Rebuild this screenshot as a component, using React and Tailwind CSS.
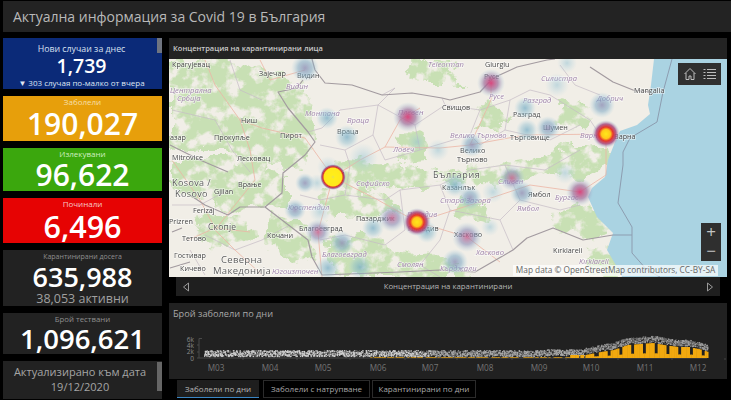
const FONT = { fontFamily: '"Open Sans","Noto Sans",sans-serif' };

const heat = [
  [305,68,14,'b2'],[327,118,11,'b'],[347,137,12,'b'],[408,117,15,'p'],[363,158,15,'l'],[417,142,10,'l'],[438,150,11,'l'],[328,167,11,'l'],
  [491,83,14,'p'],[567,63,10,'l'],[557,85,12,'l'],[525,108,11,'b'],[527,130,11,'b'],[548,128,12,'b2'],[602,105,13,'b2'],[472,145,12,'b2'],
  [455,185,12,'b'],[493,192,11,'l'],[565,173,11,'l'],[470,198,12,'b2'],[512,178,13,'p2'],[522,193,12,'b2'],[580,192,14,'p'],
  [467,237,15,'p2'],[455,262,13,'b2'],[392,218,14,'p2'],[373,228,11,'b'],[427,232,11,'b'],[305,183,10,'b2'],[317,183,9,'l'],[295,210,11,'b2'],[320,212,11,'l'],
  [318,232,13,'p2'],[342,243,12,'b2'],[328,268,12,'b'],[360,267,12,'b'],[490,227,9,'l'],
  [606,134,14,'h'],[417,222,14,'h'],[333,177,13,'s'],
];

const labels = [
  [172,67,'Крагујевац','c'],[259,76,'Зајечар','c'],[297,78,'Видин','c'],[286,89,'Видин','i'],[170,93,'Централна','i'],[177,101,'Србија','i'],
  [241,123,'Ниш','c'],[214,140,'Прокупље','c'],[280,138,'Пирот','c'],[305,116,'Монтана','i'],[347,123,'Враца','i'],[337,134,'Враца','c'],
  [393,152,'Ловеч','i'],[398,115,'Плевен','i'],[442,110,'Свищов','c'],[428,67,'Teleorman','i'],[172,160,'Mitrovice','c'],[237,161,'Лесковац','c'],[170,140,'азар','c'],
  [485,67,'Giurgiu','c'],[489,99,'Русе','i'],[484,79,'Русе','c'],[541,81,'Силистра','i'],[523,103,'Разград','i'],[513,117,'Разград','c'],[597,101,'Добрич','i'],
  [634,93,'Mangalia','c'],[543,130,'Шумен','c'],[510,140,'Търговище','c'],[580,138,'Варна','i'],[614,139,'Варна','c'],[450,138,'Велико Търново','i'],[460,153,'Велико','c'],[457,162,'Търново','c'],
  [238,187,'Врање','c'],[214,194,'Gjilan','c'],[193,213,'Ferizaj','c'],[169,224,'Prizren','c'],[182,241,'Тетово','c'],[267,238,'Кочани','c'],[174,258,'Гостивар','c'],[180,271,'Кичево','c'],
  [356,186,'Софийско','i'],[322,176,'София','c'],[288,210,'Кюстендил','i'],[299,231,'Благоевград','c'],[356,221,'Пазарджик','c'],[407,217,'Пловдив','i'],[408,231,'Пловдив','c'],[322,257,'Благоевград','i'],
  [397,267,'Смолян','i'],[272,274,'Югоизточен','i'],[442,190,'Казанлък','c'],[440,203,'Стара Загора','i'],[440,271,'Кърджали','i'],[498,184,'Сливен','i'],[528,197,'Ямбол','c'],[517,211,'Ямбол','i'],[555,200,'Бургас','i'],
  [454,237,'Хасково','c'],[476,255,'Хасково','i'],[553,253,'Kırklareli','c'],[579,264,'Kırklareli','i'],
];
const big = [[172,186,'Kosova /',9,.4],[175,197,'Kosovo',9,.4],[208,230,'Скопје',8.5,.2],[221,263,'Северна',9.5,.3],[213,274,'Македонија',9.5,.3],[433,178,'България',9,.7]];

const greens = [
  'M169,62 L230,60 L262,70 L305,85 L315,135 L305,170 L270,165 L250,175 L225,150 L169,150 Z',
  'M169,160 L225,160 L285,175 L285,205 L240,210 L190,195 L169,190 Z',
  'M272,215 L305,222 L315,255 L295,265 L262,245 Z',
  'M335,158 L400,165 L445,170 L520,162 L570,146 L606,146 L610,168 L585,180 L545,172 L500,184 L460,182 L400,188 L350,194 L330,176 Z',
  'M318,190 L378,194 L402,212 L360,218 L328,218 Z',
  'M328,238 L378,233 L398,256 L442,254 L475,277 L335,277 Z',
  'M553,212 L592,204 L614,233 L585,240 L553,228 Z',
  'M593,243 L620,256 L622,277 L588,277 Z',
  'M458,198 L492,203 L488,225 L452,217 Z',
  'M400,59 L445,59 L465,84 L420,84 Z','M482,103 L512,116 L497,134 L476,124 Z','M558,98 L592,106 L588,130 L558,124 Z',
  'M200,215 L240,215 L255,240 L225,250 L195,240 Z','M395,135 L425,130 L430,160 L400,162 Z',
];

const roads = [
  'M205,60 L215,85 L240,120 L262,128 L305,138 L333,177 L378,200 L417,222 L470,205 L530,185 L580,192 L606,175 L606,135',
  'M240,120 L250,150 L255,180 L215,230 L235,250 L262,275',
  'M333,177 L318,232 L322,277','M333,177 L360,160 L385,147 L400,120 L420,108',
  'M385,147 L440,148 L470,145 L491,100 L491,83','M470,145 L525,135 L606,134','M417,222 L467,237 L500,262',
  'M172,160 L200,200 L215,228','M188,240 L215,228 L250,232','M260,60 L270,80 L305,70',
];
const provinces = [
  'M308,132 L322,128 L340,110 L378,105 L395,88 L382,95 M378,105 L373,135 L345,150 L320,145',
  'M378,105 L415,125 L420,150 L385,160 L373,135','M415,125 L445,105 L480,110 L470,135 L420,150','M445,105 L442,98',
  'M480,110 L510,100 L530,90 L550,95 L590,120 L600,135 M510,100 L505,130 L480,145 L470,135','M505,130 L550,140 L580,125',
  'M345,150 L350,165 L345,195 L320,200 L300,195','M345,195 L385,200 L400,190 L440,185 L470,170 L505,165 L545,170 L580,150',
  'M400,190 L405,230 L385,245 L345,235 L320,240','M440,185 L450,210 L500,220 L520,200 L505,165','M450,210 L440,240 L420,265 L440,277','M520,200 L560,210 L580,205',
  'M500,220 L513,250',
  'M172,110 L215,120 L232,150 L250,172','M230,60 L240,90 L262,100','M172,205 L200,205 L228,190',
  'M205,235 L235,250 L262,240 L290,225 M190,250 L205,275','M600,95 L575,85 L560,65',
];

let seed = 7;
const rnd = () => { seed = (seed * 16807) % 2147483647; return seed / 2147483647; };
const env = [[560,357],[585,355],[600,352],[613,350],[627,345],[640,344],[652,343],[663,345],[677,347],[688,347],[702,350],[707,352]];
const topAt = (x) => {
  for (let i = 1; i < env.length; i++) if (x <= env[i][0]) {
    const [a,b] = env[i-1], [c,d] = env[i];
    return b + (d - b) * (x - a) / (c - a);
  }
  return 352;
};
const bars = [], dots = [];
for (let x = 204; x < 707; x += 1.68) {
  if (x > 585) {
    const phase = ((x - 621) % 11.9 + 11.9) % 11.9;
    const drop = phase > 8.4 ? 0.32 : 1;
    const top = 358 - (358 - topAt(x)) * drop;
    bars.push([x, top]);
    for (let i = 0; i < 9; i++) dots.push([x + rnd(), topAt(x) - 1.5 - rnd() * 6, rnd() > .4 ? '#a0a0a0' : '#5f5f5f']);
  } else {
    if (x > 370 && rnd() > .25) bars.push([x, x > 570 ? 355 : 357.4]);
    const light = x < 430;
    for (let i = 0; i < 9; i++) dots.push([x + rnd(), 350 + rnd() * 6 + (x > 545 ? -0.8 : 0), rnd() > .22 ? (light ? '#cfcfcf' : '#a8a8a8') : '#5a5a5a']);
  }
}
const months = [['M03',216],['M04',270],['M05',323],['M06',378],['M07',430],['M08',485],['M09',539],['M10',591],['M11',645],['M12',698]];

function MapView() {
  return (
    <svg viewBox="169 59 558 218" className="block w-full h-full" style={{ filter: 'blur(0.35px)' }}>
      <defs>
        <filter id="rough" x="-10%" y="-10%" width="120%" height="120%">
          <feTurbulence type="fractalNoise" baseFrequency="0.06" numOctaves="4" seed="4" result="n" />
          <feDisplacementMap in="SourceGraphic" in2="n" scale="22" xChannelSelector="R" yChannelSelector="G" result="d" />
          <feTurbulence type="fractalNoise" baseFrequency="0.075" numOctaves="4" seed="11" />
          <feColorMatrix type="matrix" values="0 0 0 0 0  0 0 0 0 0  0 0 0 0 0  5 0 0 0 -1.6" result="m" />
          <feComposite in="d" in2="m" operator="in" />
          <feGaussianBlur stdDeviation="0.45" />
        </filter>
        <radialGradient id="b"><stop offset="0" stopColor="#6fa9c4" stopOpacity=".7" /><stop offset=".55" stopColor="#8abccf" stopOpacity=".42" /><stop offset="1" stopColor="#a9d1e2" stopOpacity="0" /></radialGradient>
        <radialGradient id="l"><stop offset="0" stopColor="#8fc0d2" stopOpacity=".5" /><stop offset="1" stopColor="#a9d1e2" stopOpacity="0" /></radialGradient>
        <radialGradient id="b2"><stop offset="0" stopColor="#8f8fb5" stopOpacity=".8" /><stop offset=".5" stopColor="#7fa9c5" stopOpacity=".55" /><stop offset="1" stopColor="#a9d1e2" stopOpacity="0" /></radialGradient>
        <radialGradient id="p2"><stop offset="0" stopColor="#c8608f" stopOpacity=".8" /><stop offset=".5" stopColor="#8d8fb8" stopOpacity=".6" /><stop offset="1" stopColor="#a9d1e2" stopOpacity="0" /></radialGradient>
        <radialGradient id="p"><stop offset="0" stopColor="#d93f78" stopOpacity=".95" /><stop offset=".5" stopColor="#a0749f" stopOpacity=".72" /><stop offset="1" stopColor="#a9d1e2" stopOpacity="0" /></radialGradient>
        <radialGradient id="h"><stop offset="0" stopColor="#ffe81a" /><stop offset=".32" stopColor="#ffc91a" /><stop offset=".5" stopColor="#e6352e" /><stop offset=".72" stopColor="#a64a80" stopOpacity=".85" /><stop offset="1" stopColor="#a9d1e2" stopOpacity="0" /></radialGradient>
        <radialGradient id="s"><stop offset="0" stopColor="#e8e050" /><stop offset=".15" stopColor="#ffee1a" /><stop offset=".68" stopColor="#ffe81a" /><stop offset=".78" stopColor="#d8302c" /><stop offset=".88" stopColor="#9a4a80" stopOpacity=".8" /><stop offset="1" stopColor="#a9d1e2" stopOpacity="0" /></radialGradient>
      </defs>
      <rect x="169" y="59" width="558" height="218" fill="#f1eee7" />
      <g filter="url(#rough)" fill="#c8e0b4">
        {greens.map((d, i) => <path key={i} d={d} />)}
      </g>
      <path d="M654,59 L651,85 L648,105 L650,114 L637,125 L620,131 L615,142 L608,160 L605,177 L592,188 L588,197 L597,217 L613,233 L607,250 L617,267 L622,277 L727,277 L727,59 Z" fill="#aad3e2" />
      <g fill="none" strokeLinejoin="round">
        {provinces.map((d, i) => <path key={i} d={d} stroke="#c6bcc6" strokeWidth=".7" />)}
        {roads.map((d, i) => <path key={i} d={d} stroke="#ecb5a5" strokeWidth=".8" />)}
        <path d="M312,59 L315,70 L325,83 L352,85 L382,95 L412,93 L442,98 L450,100 L480,92 L493,78 L517,67 L547,60 L555,59 M590,67 L613,82 L633,90 L650,92 M303,80 L297,88 L278,92 L288,108 L308,132 L315,142 L305,155 L283,173 L282,193 L265,207 L240,207 L228,215 L205,205 L190,195 M265,207 L308,240 L312,257 L322,275 M322,275 L400,272 L440,270 L475,272 L513,250 L527,238 L553,228 L583,240 L613,235 M170,145 L200,160 L228,172 M172,232 L182,228 M190,262 L170,268" stroke="#a39ba0" strokeWidth="1.2" />
        <path d="M672,59 L663,92 L657,122 L630,138 L623,152 L623,165 L618,203 L632,227 L632,253 L647,270 L660,277 M613,235 L632,235" stroke="#8d9db0" strokeWidth="1" />
      </g>
      {labels.map(([x, y, t, k], i) => (
        <text key={i} x={x} y={y} fontSize={k === 'i' ? 7.6 : 7.2} fontStyle={k === 'i' ? 'italic' : 'normal'} fill={k === 'i' ? '#a084aa' : '#474747'} stroke="#ffffff" strokeOpacity=".6" strokeWidth="1.4" paintOrder="stroke" style={FONT}>{t}</text>
      ))}
      {big.map(([x, y, t, s, ls], i) => (
        <text key={i} x={x} y={y} fontSize={s} letterSpacing={ls} fill="#5d5d5d" stroke="#ffffff" strokeOpacity=".6" strokeWidth="1.4" paintOrder="stroke" style={FONT}>{t}</text>
      ))}
      {heat.map(([x, y, r, k], i) => <circle key={i} cx={x} cy={y} r={r} fill={`url(#${k})`} />)}
    </svg>
  );
}

function Chart() {
  return (
    <svg viewBox="169 328 558 51" className="block w-full h-[51px]">
      <g fontSize="6.5" fill="#8d8d8d" textAnchor="end" style={FONT}>
        <text x="194" y="341.5">6k</text><text x="194" y="347.5">4k</text><text x="194" y="354">2k</text><text x="194" y="360.500">0</text>
      </g>
      <path d="M202,338.5 H199 M199,338.5 V358 M197,345 H199 M197,352 H199 M197,358 H707" stroke="#4a4a4a" strokeWidth="1" fill="none" />
      {months.map(([m, x]) => <path key={m} d={`M${x + 27},358 V360`} stroke="#444" />)}
      {dots.map(([x, y, c], i) => <rect key={i} x={x} y={y} width="1.3" height="1.3" fill={c} />)}
      {bars.map(([x, y], i) => <rect key={i} x={x} y={y} width="2.2" height={358 - y} fill="#f2a90f" />)}
      <g fontSize="8.2" fill="#747474" textAnchor="middle" style={FONT}>
        {months.map(([m, x]) => <text key={m} x={x} y="371">{m}</text>)}
      </g>
    </svg>
  );
}

function Stat({ h, bg, label, labelColor, value, size }) {
  return (
    <div className={`flex flex-col items-center shrink-0 ${h} ${bg}`}>
      <div className={`text-[8px] leading-[10px] ${labelColor}`}>{label}</div>
      <div className={`font-semibold text-white ${size}`}>{value}</div>
    </div>
  );
}

export default function App() {
  return (
    <div className="w-[731px] h-[400px] bg-black overflow-hidden relative" style={FONT}>
      <div className="mt-px ml-[3px] h-[31px] bg-[#232323] flex items-center pl-[10px] text-[14px] text-[#b9b9b9]">
        Актуална информация за Covid 19 в България
      </div>
      <div className="flex mt-[6px] ml-[3px]">
        <div className="w-[159px] flex flex-col gap-[7px] relative shrink-0">
          <div className="h-[51px] shrink-0 bg-[#0b2a78] flex flex-col items-center text-white pt-[5px] pr-[2px]">
            <div className="text-[8.8px] leading-[12px] text-[#d7e0f0]">Нови случаи за днес</div>
            <div className="text-[19.5px] leading-[22px] font-semibold">1,739</div>
            <div className="text-[8px] leading-[11px] whitespace-nowrap text-[#dfe6f2]">▼ 303 случая по-малко от вчера</div>
          </div>
          <Stat h="h-[45px]" bg="bg-[#e79f0b]" label="Заболели" labelColor="text-[#f6dfa8] pt-px" value="190,027" size="text-[30px] leading-[34px]" />
          <Stat h="h-[43px]" bg="bg-[#3ba70d]" label="Излекувани" labelColor="text-[#cfeec0] pt-px" value="96,622" size="text-[30px] leading-[32px]" />
          <Stat h="h-[45px]" bg="bg-[#e60303]" label="Починали" labelColor="text-[#f6c9c9] pt-px" value="6,496" size="text-[30.5px] leading-[34px]" />
          <div className="h-[56px] shrink-0 bg-[#222222] flex flex-col items-center pt-[2px]">
            <div className="text-[7px] leading-[10px] text-[#8f8f8f]">Карантинирани досега</div>
            <div className="text-[27px] leading-[29px] font-semibold text-white">635,988</div>
            <div className="text-[12.5px] leading-[15px] text-[#a0a0a0]">38,053 активни</div>
          </div>
          <div className="h-[41px] shrink-0 bg-[#222222] flex flex-col items-center pt-[1px]">
            <div className="text-[7.8px] leading-[10px] text-[#8f8f8f]">Брой тествани</div>
            <div className="text-[27.5px] leading-[30px] font-semibold text-white">1,096,621</div>
          </div>
          <div className="h-[38px] shrink-0 bg-[#222222] flex flex-col items-center pt-[3px] text-[11px] leading-[15px] text-[#a5a5a5] whitespace-nowrap pr-[5px]">
            <div>Актуализирано към дата</div>
            <div>19/12/2020</div>
          </div>
          <div className="absolute right-0 top-0 w-[5px] h-[15px] bg-[#6f7480]" />
          <div className="absolute right-0 top-[324px] w-[5px] h-[29px] bg-[#666666]" />
        </div>
        <div className="w-[558px] ml-[7px] shrink-0 flex flex-col">
          <div className="h-[21px] bg-[#232323] flex items-center pl-[4px] text-[7.5px] font-semibold text-[#c9c9c9]">
            Концентрация на карантинирани лица
          </div>
          <div className="h-[218px] relative overflow-hidden">
            <MapView />
            <div className="absolute left-[509px] top-[4px] w-[43px] h-[22px] bg-[#2f2f2f] flex items-center justify-center gap-[6px] text-[#bdbdbd]">
              <svg width="14" height="14" viewBox="0 0 14 14" fill="none" stroke="currentColor" strokeWidth="1"><path d="M1.5 7 7 1.5 12.5 7M3 6v6.5h3V9h2v3.500h3V6" /></svg>
              <svg width="13" height="14" viewBox="0 0 13 14" fill="none" stroke="currentColor" strokeWidth="1"><path d="M0.500 2.500h2M4 2.500h9M0.500 5.500h2M4 5.500h9M0.500 8.500h2M4 8.500h9M0.500 11.500h2M4 11.500h9" /></svg>
            </div>
            <div className="absolute left-[532px] top-[164px] w-[20px] h-[38px] bg-[#2f2f2f] flex flex-col items-center justify-around text-[#c4c4c4] text-[17px] leading-[16px] pb-[1px]">
              <span>+</span><span>−</span>
            </div>
            <div className="absolute left-[344px] top-[206px] w-[205px] h-[11px] bg-white/70 flex items-center justify-center text-[8.3px] text-[#666] whitespace-nowrap">
              Map data © OpenStreetMap contributors, CC-BY-SA
            </div>
          </div>
          <div className="mx-[7px] h-[19px] bg-[#1f1f1f] flex items-center justify-between px-[6px] text-[7.8px] text-[#b5b5b5]">
            <svg width="8" height="10" viewBox="0 0 8 10" fill="none" stroke="#9a9a9a"><path d="M6.500 1 1.500 5l5 4z" /></svg>
            <span>Концентрация на карантинирани</span>
            <svg width="8" height="10" viewBox="0 0 8 10" fill="none" stroke="#9a9a9a"><path d="M1.500 1l5 4-5 4z" /></svg>
          </div>
          <div className="mt-[7px] h-[76px] bg-[#212121] flex flex-col">
            <div className="h-[25px] pl-[4px] pt-[4px] text-[9.2px] leading-[14px] text-[#a8a8a8]">Брой заболели по дни</div>
            <Chart />
          </div>
          <div className="flex h-[18px] ml-[8px] text-[8px] whitespace-nowrap mt-px">
            <div className="w-[82px] bg-[#1e1e1e] border-b border-[#3b86c4] flex items-center justify-center text-[#b5b5b5]">Заболели по дни</div>
            <div className="ml-[4px] w-[107px] border border-[#2b2b2b] flex items-center justify-center text-[#a8a8a8]">Заболели с натрупване</div>
            <div className="ml-[2px] w-[104px] border border-[#2b2b2b] flex items-center justify-center text-[#a8a8a8]">Карантинирани по дни</div>
          </div>
        </div>
      </div>
    </div>
  );
}
